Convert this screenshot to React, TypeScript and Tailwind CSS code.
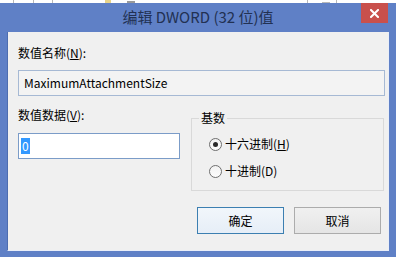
import React from 'react';

const font = { fontFamily: '"Noto Sans CJK SC", "Noto Sans", sans-serif' };

function Radio({ checked, label, accel }: { checked?: boolean; label: string; accel: React.ReactNode }) {
  return (
    <div className="flex items-center h-[16px]">
      <span className="w-[13px] h-[13px] rounded-full border border-[#6f6f6f] bg-gradient-to-b from-[#f2f2f2] to-[#fdfdfd] flex items-center justify-center">
        {checked && <span className="w-[5px] h-[5px] rounded-full bg-[#2a2a2a]" />}
      </span>
      <span className="ml-[3px] text-[12px] leading-[16px] text-black">
        {label}({accel})
      </span>
    </div>
  );
}

export default function App() {
  return (
    <div className="w-[396px] h-[257px] bg-white overflow-hidden select-none" style={font}>
      {/* whatever is behind the dialog */}
      <div className="h-[3px] flex items-end">
        <span className="ml-[13px] w-px h-[3px] bg-[#b8b8b8]" />
        <span className="ml-[19px] w-px h-[3px] bg-[#b8b8b8]" />
        <span className="ml-[18px] w-px h-[3px] bg-[#b8b8b8]" />
        <span className="ml-[52px] w-[6px] h-[3px] bg-[#e8d48a]" />
        <span className="ml-[16px] w-[8px] h-[2px] bg-[#9a9a9a]" />
        <span className="ml-[172px] w-px h-[3px] bg-[#b8b8b8]" />
        <span className="ml-[14px] w-[8px] h-px bg-[#b8b8b8]" />
        <span className="ml-[6px] w-px h-[3px] bg-[#b8b8b8]" />
      </div>

      {/* window frame */}
      <div className="h-[254px] bg-[#5f80c6] flex flex-col px-[7px] pb-[6px]">
        <div className="relative h-[29px] flex items-center justify-center">
          <span className="text-[15px] leading-[20px] text-[#223152] -mt-[1px]">编辑 DWORD (32 位)值</span>
          <button className="absolute right-[1px] top-0 w-[27px] h-[20px] bg-[#c9504c] flex items-center justify-center">
            <svg width="9" height="9" viewBox="0 0 9 9">
              <path d="M1 1 L8 8 M8 1 L1 8" stroke="#ffffff" strokeWidth="2" strokeLinecap="square" />
            </svg>
          </button>
        </div>

        {/* client area */}
        <div className="flex-1 bg-[#f0f0f0] border-l border-[#4d6db0] border-r border-b border-r-[#e9eef8] border-b-[#e9eef8] flex flex-col pl-[10px] pr-[3px] pt-[13px] text-[12px] leading-[16px] text-black">
          <div>
            数值名称(<u>N</u>):
          </div>
          <div className="mt-[9px] h-[26px] border border-[#a6b9d4] bg-[#f3f3f3] flex items-center pl-[5px]">
            MaximumAttachmentSize
          </div>

          <div className="mt-[11px] flex">
            <div className="w-[162px] flex flex-col">
              <div>
                数值数据(<u>V</u>):
              </div>
              <div className="mt-[10px] h-[26px] border border-[#7b9cc8] bg-white flex items-center pl-[2px]">
                <span className="bg-[#3399ff] text-white px-[1px] leading-[16px]">0</span>
              </div>
            </div>

            <fieldset className="ml-[11px] mt-[3px] w-[193px] h-[81px] border border-[#d9d9d9] flex flex-col">
              <legend className="ml-[7px] px-[2px] leading-[16px]">基数</legend>
              <div className="pl-[17px] pt-[10px] flex flex-col gap-[11px]">
                <Radio checked label="十六进制" accel={<u>H</u>} />
                <Radio label="十进制" accel="D" />
              </div>
            </fieldset>
          </div>

          <div className="mt-[16px] flex justify-end gap-[10px] pr-[4px]">
            <button className="w-[87px] h-[27px] border border-[#3c7fb1] bg-gradient-to-b from-[#f1f6fb] to-[#e6eef7] text-[12px] text-black">
              确定
            </button>
            <button className="w-[87px] h-[27px] border border-[#acacac] bg-gradient-to-b from-[#f0f0f0] to-[#e5e5e5] text-[12px] text-black">
              取消
            </button>
          </div>
        </div>
      </div>
    </div>
  );
}
